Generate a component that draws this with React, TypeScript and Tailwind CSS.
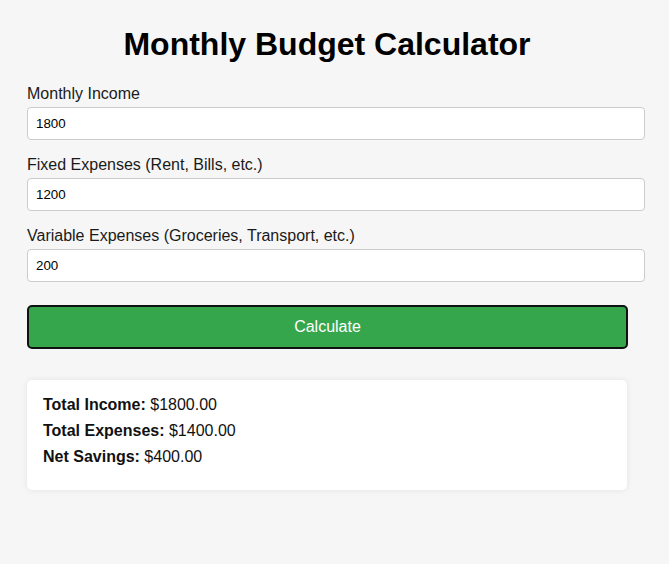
import React, { useState } from "react";

const Field: React.FC<{ label: string; value: string; onChange: (v: string) => void }> = ({
  label,
  value,
  onChange,
}) => (
  <div className="flex flex-col">
    <label className="text-[16px] leading-[18px] text-[#1a1a1a] pt-[1px] mb-[4px]">{label}</label>
    <input
      type="number"
      value={value}
      onChange={(e) => onChange(e.target.value)}
      className="w-[618px] h-[33px] px-[8px] text-[13.33px] text-black bg-white border border-[#cccccc] rounded-[4px] outline-none"
    />
  </div>
);

const App: React.FC = () => {
  const [income, setIncome] = useState("1800");
  const [fixed, setFixed] = useState("1200");
  const [variable, setVariable] = useState("200");

  const total = (parseFloat(fixed) || 0) + (parseFloat(variable) || 0);
  const inc = parseFloat(income) || 0;

  return (
    <div
      className="min-h-screen w-full bg-[#f6f6f6] text-black"
      style={{ fontFamily: '"Liberation Sans", Arial, sans-serif' }}
    >
      <div className="w-[600px] ml-[27px] pt-[26px]">
        <h1 className="text-[32px] leading-[37px] font-bold text-center mb-[21px]">
          Monthly Budget Calculator
        </h1>
        <div className="flex flex-col gap-[15px]">
          <Field label="Monthly Income" value={income} onChange={setIncome} />
          <Field label="Fixed Expenses (Rent, Bills, etc.)" value={fixed} onChange={setFixed} />
          <Field
            label="Variable Expenses (Groceries, Transport, etc.)"
            value={variable}
            onChange={setVariable}
          />
        </div>
        <button
          type="button"
          className="mt-[23px] w-[601px] h-[44px] bg-[#35a64b] text-white text-[16px] border-2 border-[#111111] rounded-[5px]"
        >
          Calculate
        </button>
        <div className="mt-[31px] w-[600px] h-[110px] bg-white rounded-[5px] shadow-[0_0_6px_rgba(0,0,0,0.08)] px-[16px] pt-[16px] flex flex-col gap-[8px] text-[16px] leading-[18px] text-[#111111]">
          <div>
            <span className="font-bold">Total Income:</span> ${inc.toFixed(2)}
          </div>
          <div>
            <span className="font-bold">Total Expenses:</span> ${total.toFixed(2)}
          </div>
          <div>
            <span className="font-bold">Net Savings:</span> ${(inc - total).toFixed(2)}
          </div>
        </div>
      </div>
    </div>
  );
};

export default App;
